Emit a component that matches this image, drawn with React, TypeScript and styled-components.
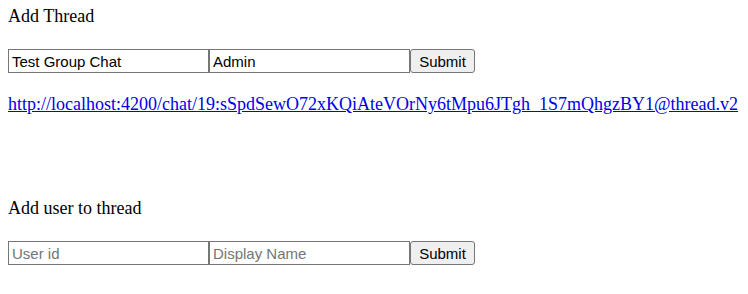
import styled, { createGlobalStyle } from 'styled-components';

const GlobalStyle = createGlobalStyle`
  body {
    margin: 0;
    background: #ffffff;
    font-family: "Liberation Serif", "Times New Roman", serif;
    color: #000000;
  }
`;

function App() {
  return (
    <>
      <GlobalStyle />
      <Page>
        <Section>
          <Heading>Add Thread</Heading>
          <FormRow>
            <TextInput defaultValue="Test Group Chat" />
            <TextInput defaultValue="Admin" />
            <SubmitButton type="button">Submit</SubmitButton>
          </FormRow>
          <LinkLine>
            <ThreadLink href="#">
              http://localhost:4200/chat/19:sSpdSewO72xKQiAteVOrNy6tMpu6JTgh_1S7mQhgzBY1@thread.v2
            </ThreadLink>
          </LinkLine>
        </Section>
        <Section $top={84}>
          <Heading>Add user to thread</Heading>
          <FormRow>
            <TextInput placeholder="User id" />
            <TextInput placeholder="Display Name" />
            <SubmitButton type="button">Submit</SubmitButton>
          </FormRow>
        </Section>
      </Page>
    </>
  );
}

export default App;

const Page = styled.main`
  display: flex;
  flex-direction: column;
  padding: 6px 8px 8px;
`;

const Section = styled.section<{ $top?: number }>`
  display: flex;
  flex-direction: column;
  align-items: flex-start;
  margin-top: ${(p) => p.$top ?? 0}px;
`;

const Heading = styled.div`
  font-size: 18px;
  line-height: 20px;
  height: 20px;
`;

const FormRow = styled.form`
  display: flex;
  align-items: stretch;
  margin-top: 23px;
  height: 24px;
`;

const TextInput = styled.input`
  box-sizing: border-box;
  width: 201px;
  height: 24px;
  margin: 0;
  padding: 1px 3px;
  border: 1px solid #767676;
  border-radius: 0;
  background: #ffffff;
  color: #000000;
  font-family: "Liberation Sans", Arial, sans-serif;
  font-size: 15px;
  outline: none;

  &::placeholder {
    color: #757575;
  }
`;

const SubmitButton = styled.button`
  box-sizing: border-box;
  width: 65px;
  height: 24px;
  margin: 0;
  padding: 1px 6px;
  border: 1px solid #767676;
  border-radius: 3px;
  background: #efefef;
  color: #000000;
  font-family: "Liberation Sans", Arial, sans-serif;
  font-size: 15px;
`;

const LinkLine = styled.div`
  margin-top: 21px;
  font-size: 18px;
  line-height: 20px;
  white-space: nowrap;
`;

const ThreadLink = styled.a`
  color: #0000ee;
  text-decoration: underline;
`;
